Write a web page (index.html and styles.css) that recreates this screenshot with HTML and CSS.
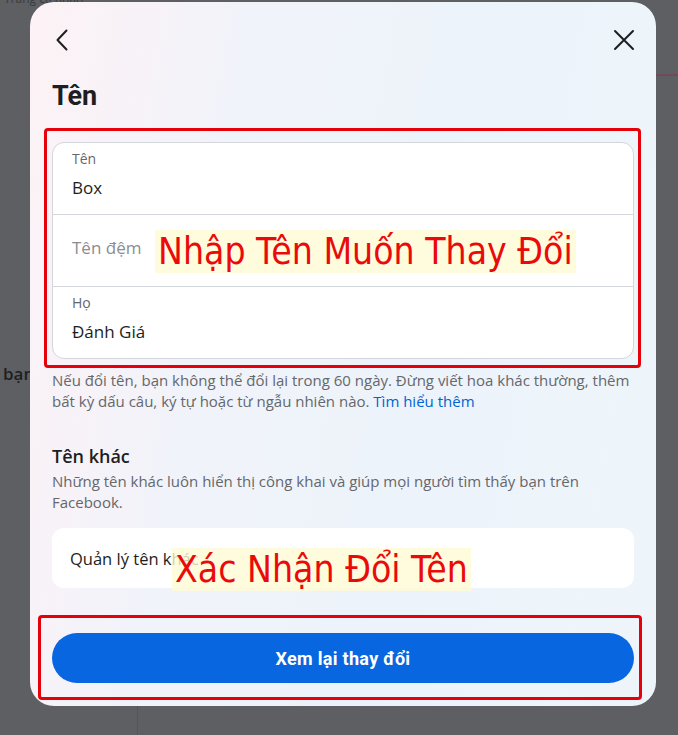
FILE: index.html
```html
<!DOCTYPE html>
<html lang="vi">
<head>
<meta charset="utf-8">
<title>Tên</title>
<link rel="stylesheet" href="styles.css">
</head>
<body>
  <div class="page">
    <div class="page-top">Trang cá nhân</div>
    <div class="page-side">bạn</div>
    <div class="page-rule"></div>
    <div class="page-col"></div>
  </div>

  <div class="modal">
    <div class="modal-head">
      <button class="icon-btn" aria-label="Quay lại">
        <svg width="24" height="24" viewBox="0 0 24 24"><path d="M14.5 2.5 L5.5 12 L14.5 21.5" fill="none" stroke="#1c1e21" stroke-width="2" stroke-linecap="round" stroke-linejoin="round"/></svg>
      </button>
      <button class="icon-btn" aria-label="Đóng">
        <svg width="24" height="24" viewBox="0 0 24 24"><path d="M3 3 L21 21 M21 3 L3 21" fill="none" stroke="#1c1e21" stroke-width="2" stroke-linecap="round"/></svg>
      </button>
    </div>

    <h1 class="title">Tên</h1>

    <div class="fields">
      <div class="field">
        <span class="field-label">Tên</span>
        <span class="field-value">Box</span>
      </div>
      <div class="field field-empty">
        <span class="field-placeholder">Tên đệm</span>
      </div>
      <div class="field">
        <span class="field-label">Họ</span>
        <span class="field-value">Đánh Giá</span>
      </div>
    </div>

    <p class="note">Nếu đổi tên, bạn không thể đổi lại trong 60 ngày. Đừng viết hoa khác thường, thêm bất kỳ dấu câu, ký tự hoặc từ ngẫu nhiên nào. <a href="#" class="link">Tìm hiểu thêm</a></p>

    <h2 class="subtitle">Tên khác</h2>
    <p class="note note-narrow">Những tên khác luôn hiển thị công khai và giúp mọi người tìm thấy bạn trên Facebook.</p>

    <div class="row-card">Quản lý tên khác</div>

    <div class="actions">
      <button class="primary">Xem lại thay đổi</button>
    </div>

    <!-- callouts drawn over the form -->
    <div class="mark mark-fields"></div>
    <div class="mark mark-action"></div>
    <div class="tag tag-fields">Nhập Tên Muốn Thay Đổi</div>
    <div class="tag tag-action">Xác Nhận Đổi Tên</div>
  </div>
</body>
</html>
```

FILE: styles.css
```css
* { box-sizing: border-box; }

html, body {
  margin: 0;
  width: 678px;
  height: 735px;
  overflow: hidden;
}

body {
  background: #5d5f62;
  font-family: "Open Sans", "Noto Sans", sans-serif;
  color: #1c1e21;
  position: relative;
}

/* dimmed page behind the dialog */
.page {
  position: relative;
  width: 100%;
  height: 100%;
}
.page-top {
  position: absolute;
  left: 4px;
  top: -9px;
  font-size: 12px;
  line-height: 16px;
  color: #3a3b3d;
}
.page-side {
  position: absolute;
  left: 3px;
  top: 362px;
  font-size: 17px;
  line-height: 24px;
  font-weight: 600;
  color: #1e1f21;
}
.page-rule {
  position: absolute;
  right: 0;
  top: 74px;
  width: 24px;
  height: 2px;
  background: #6f4c55;
}
.page-col {
  position: absolute;
  left: 137px;
  top: 706px;
  width: 1px;
  height: 40px;
  background: #53555a;
}

/* dialog */
.modal {
  position: absolute;
  left: 30px;
  top: 2px;
  width: 626px;
  height: 704px;
  border-radius: 24px;
  background: linear-gradient(100deg, #fdf2f6 0%, #f2f3fa 28%, #edf3fb 60%, #eef5fa 100%);
  padding: 0 22px;
  display: flex;
  flex-direction: column;
}

.modal-head {
  display: flex;
  justify-content: space-between;
  align-items: center;
  height: 24px;
  margin-top: 26px;
  margin-right: -2px;
}
.icon-btn {
  border: 0;
  background: none;
  padding: 0;
  width: 24px;
  height: 24px;
  display: flex;
}

.title {
  margin: 28px 0 0;
  font-size: 27px;
  line-height: 32px;
  font-weight: 700;
  color: #1c1e21;
  font-family: "Roboto", "Noto Sans", sans-serif;
}

.fields {
  margin-top: 30px;
  background: #fff;
  border: 1px solid #d3d6db;
  border-radius: 12px;
  display: flex;
  flex-direction: column;
}
.field {
  height: 72px;
  padding: 7px 19px 0;
  display: flex;
  flex-direction: column;
  border-top: 1px solid #d3d6db;
}
.field:first-child { border-top: 0; height: 71px; }
.field-empty { justify-content: center; padding-top: 0; padding-bottom: 5px; }
.field-label {
  font-size: 14px;
  line-height: 18px;
  color: #65676b;
}
.field-value {
  margin-top: 9px;
  font-size: 17px;
  line-height: 22px;
  color: #1c1e21;
}
.field-placeholder {
  font-size: 17px;
  line-height: 22px;
  color: #8a8d91;
}

.note {
  margin: 11px 0 0;
  font-size: 15px;
  line-height: 21px;
  color: #65676b;
}
.link {
  color: #0064d1;
  text-decoration: none;
}

.subtitle {
  margin: 32px 0 0;
  font-size: 18px;
  line-height: 24px;
  font-weight: 600;
  color: #1c1e21;
}
.subtitle + .note { margin-top: 3px; }
.note-narrow { padding-right: 40px; }

.row-card {
  margin-top: 15px;
  height: 60px;
  background: #fff;
  border-radius: 12px;
  padding: 0 18px;
  display: flex;
  align-items: center;
  font-size: 16.5px;
  color: #1c1e21;
}

.actions {
  margin-top: 45px;
}
.primary {
  width: 100%;
  height: 50px;
  border: 0;
  border-radius: 25px;
  background: #0866e0;
  color: #fff;
  font-family: "Roboto", "Noto Sans", sans-serif;
  font-size: 18px;
  font-weight: 700;
  letter-spacing: 0.3px;
}

/* red callout frames and labels */
.mark {
  position: absolute;
  border: 3px solid #e5000a;
  border-radius: 4px;
  pointer-events: none;
}
.mark-fields { left: 14px; top: 126px; width: 597px; height: 240px; }
.mark-action { left: 8px; top: 613px; width: 604px; height: 85px; }

.tag {
  position: absolute;
  font-family: "DejaVu Sans Condensed", "DejaVu Sans", sans-serif;
  font-stretch: condensed;
  color: #ea0a0a;
  background: rgba(255, 250, 212, 0.8);
  font-size: 37px;
  line-height: 43px;
  padding: 0 3px;
  white-space: nowrap;
}
.tag-fields { left: 125px; top: 228px; }
.tag-action { left: 142px; top: 546px; }
```
